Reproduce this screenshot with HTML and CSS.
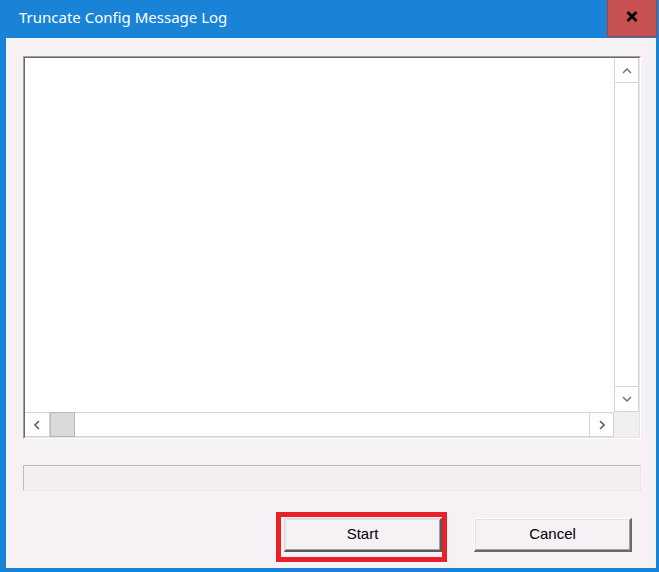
FILE: index.html
```html
<!DOCTYPE html>
<html>
<head>
<meta charset="utf-8">
<link rel="stylesheet" href="styles.css">
</head>
<body>
<div class="window">
  <div class="titlebar">
    <div class="title">Truncate Config Message Log</div>
    <div class="close">
      <svg width="12" height="11" viewBox="0 0 12 11"><path d="M1.5 1 L10.5 10 M10.5 1 L1.5 10" stroke="#000" stroke-width="2.8" fill="none"/></svg>
    </div>
  </div>
  <div class="client">
    <div class="textbox">
      <div class="textbox-inner">
        <div class="content-row">
          <div class="text-area"></div>
          <div class="vscroll">
            <div class="sbtn sbtn-up"><svg width="10" height="6" viewBox="0 0 10 6"><path d="M1 5 L5 1 L9 5" stroke="#7a7a7a" stroke-width="1.6" fill="none"/></svg></div>
            <div class="vtrack"></div>
            <div class="sbtn sbtn-down"><svg width="10" height="6" viewBox="0 0 10 6"><path d="M1 1 L5 5 L9 1" stroke="#7a7a7a" stroke-width="1.6" fill="none"/></svg></div>
          </div>
        </div>
        <div class="hscroll">
          <div class="hbtn hbtn-left"><svg width="6" height="10" viewBox="0 0 6 10"><path d="M5 1 L1 5 L5 9" stroke="#606060" stroke-width="1.6" fill="none"/></svg></div>
          <div class="thumb"></div>
          <div class="htrack"></div>
          <div class="hbtn hbtn-right"><svg width="6" height="10" viewBox="0 0 6 10"><path d="M1 1 L5 5 L1 9" stroke="#606060" stroke-width="1.6" fill="none"/></svg></div>
          <div class="corner"></div>
        </div>
      </div>
    </div>
    <div class="progress"></div>
    <div class="buttons">
      <div class="highlight-wrap">
        <button class="btn btn-default">Start</button>
        <span class="annotation"></span>
      </div>
      <button class="btn">Cancel</button>
    </div>
  </div>
</div>
</body>
</html>
```

FILE: styles.css
```css
html, body {
  margin: 0;
  padding: 0;
  background: #1883d7;
}
.window {
  width: 659px;
  height: 572px;
  background: #1883d7;
  display: flex;
  flex-direction: column;
  box-sizing: border-box;
}
.titlebar {
  height: 38px;
  display: flex;
  align-items: flex-start;
  justify-content: space-between;
}
.title {
  font-family: "Noto Sans", "Open Sans", sans-serif;
  font-size: 15px;
  color: #ffffff;
  padding-left: 19px;
  padding-top: 5px;
  line-height: 24px;
}
.close {
  width: 50px;
  height: 37px;
  box-sizing: border-box;
  background: #c75050;
  border: 1px solid #a34040;
  border-top: none;
  margin-right: 2px;
  display: flex;
  align-items: center;
  justify-content: center;
  padding-bottom: 4px;
}
.close svg { display: block; }
.client {
  flex: 1;
  margin: 0 3px 4px 6px;
  background: #f5f1f5;
  padding: 18px 15px 0 17px;
  display: flex;
  flex-direction: column;
}
.textbox {
  height: 383px;
  box-sizing: border-box;
  border-top: 1px solid #a0a0a0;
  border-left: 1px solid #a0a0a0;
  border-right: 1px solid #ffffff;
  border-bottom: 1px solid #ffffff;
}
.textbox-inner {
  height: 100%;
  box-sizing: border-box;
  border-top: 1px solid #696969;
  border-left: 1px solid #696969;
  border-right: 1px solid #e3e3e3;
  border-bottom: 1px solid #e3e3e3;
  display: flex;
  flex-direction: column;
  background: #fff;
}
.content-row {
  flex: 1;
  display: flex;
}
.text-area {
  flex: 1;
  background: #fff;
}
.vscroll {
  width: 25px;
  display: flex;
  flex-direction: column;
  background: #fff;
  box-sizing: border-box;
  border-left: 1px solid #d4d4d4;
  border-right: 1px solid #d4d4d4;
  padding-top: 2px;
}
.sbtn {
  height: 23px;
  display: flex;
  align-items: center;
  justify-content: center;
  box-sizing: border-box;
}
.sbtn-up { border-bottom: 1px solid #d4d4d4; }
.sbtn-down { border-top: 1px solid #d4d4d4; height: 26px; border-bottom: 1px solid #d4d4d4; }
.vtrack { flex: 1; }
.hscroll {
  height: 25px;
  display: flex;
  box-sizing: border-box;
  border-top: 1px solid #d4d4d4;
  border-bottom: 1px solid #d4d4d4;
  background: #fff;
}
.hbtn {
  width: 25px;
  display: flex;
  align-items: center;
  justify-content: center;
  box-sizing: border-box;
}
.hbtn-left { border-right: 1px solid #d4d4d4; }
.hbtn-right { border-left: 1px solid #d4d4d4; border-right: 1px solid #d4d4d4; }
.thumb {
  width: 25px;
  background: #dadada;
  box-sizing: border-box;
  border: 1px solid #b8b8b8;
  margin: -1px 0;
}
.htrack { flex: 1; }
.corner {
  width: 25px;
  background: #f0eef0;
  margin: -1px 0;
}
.progress {
  margin-top: 26px;
  height: 26px;
  box-sizing: border-box;
  border-top: 1px solid #bcbcbc;
  border-left: 1px solid #bcbcbc;
  border-right: 1px solid #e8e8e8;
  border-bottom: 1px solid #e8e8e8;
  background: #f2eef2;
}
.buttons {
  margin-top: 27px;
  display: flex;
  justify-content: flex-end;
  gap: 32px;
  padding-right: 9px;
}
.highlight-wrap {
  position: relative;
  display: flex;
}
.btn {
  width: 158px;
  height: 34px;
  box-sizing: border-box;
  font-family: "Liberation Sans", Arial, sans-serif;
  font-size: 15px;
  color: #000;
  background: #f5f1f5;
  border-style: solid;
  border-width: 1px 2px 2px 1px;
  border-color: #ffffff #696969 #696969 #ffffff;
  box-shadow: inset 1px 1px 0 #e3e3e3, inset -1px -1px 0 #a0a0a0;
  padding: 0 0 2px 0;
  margin: 0;
}
.btn-default {
  border-color: #d8d8d8 #5a5a5a #5a5a5a #d8d8d8;
}
.annotation {
  position: absolute;
  left: -8px;
  right: -5px;
  top: -6px;
  bottom: -10px;
  border: 5px solid #e8202a;
  pointer-events: none;
}
```
